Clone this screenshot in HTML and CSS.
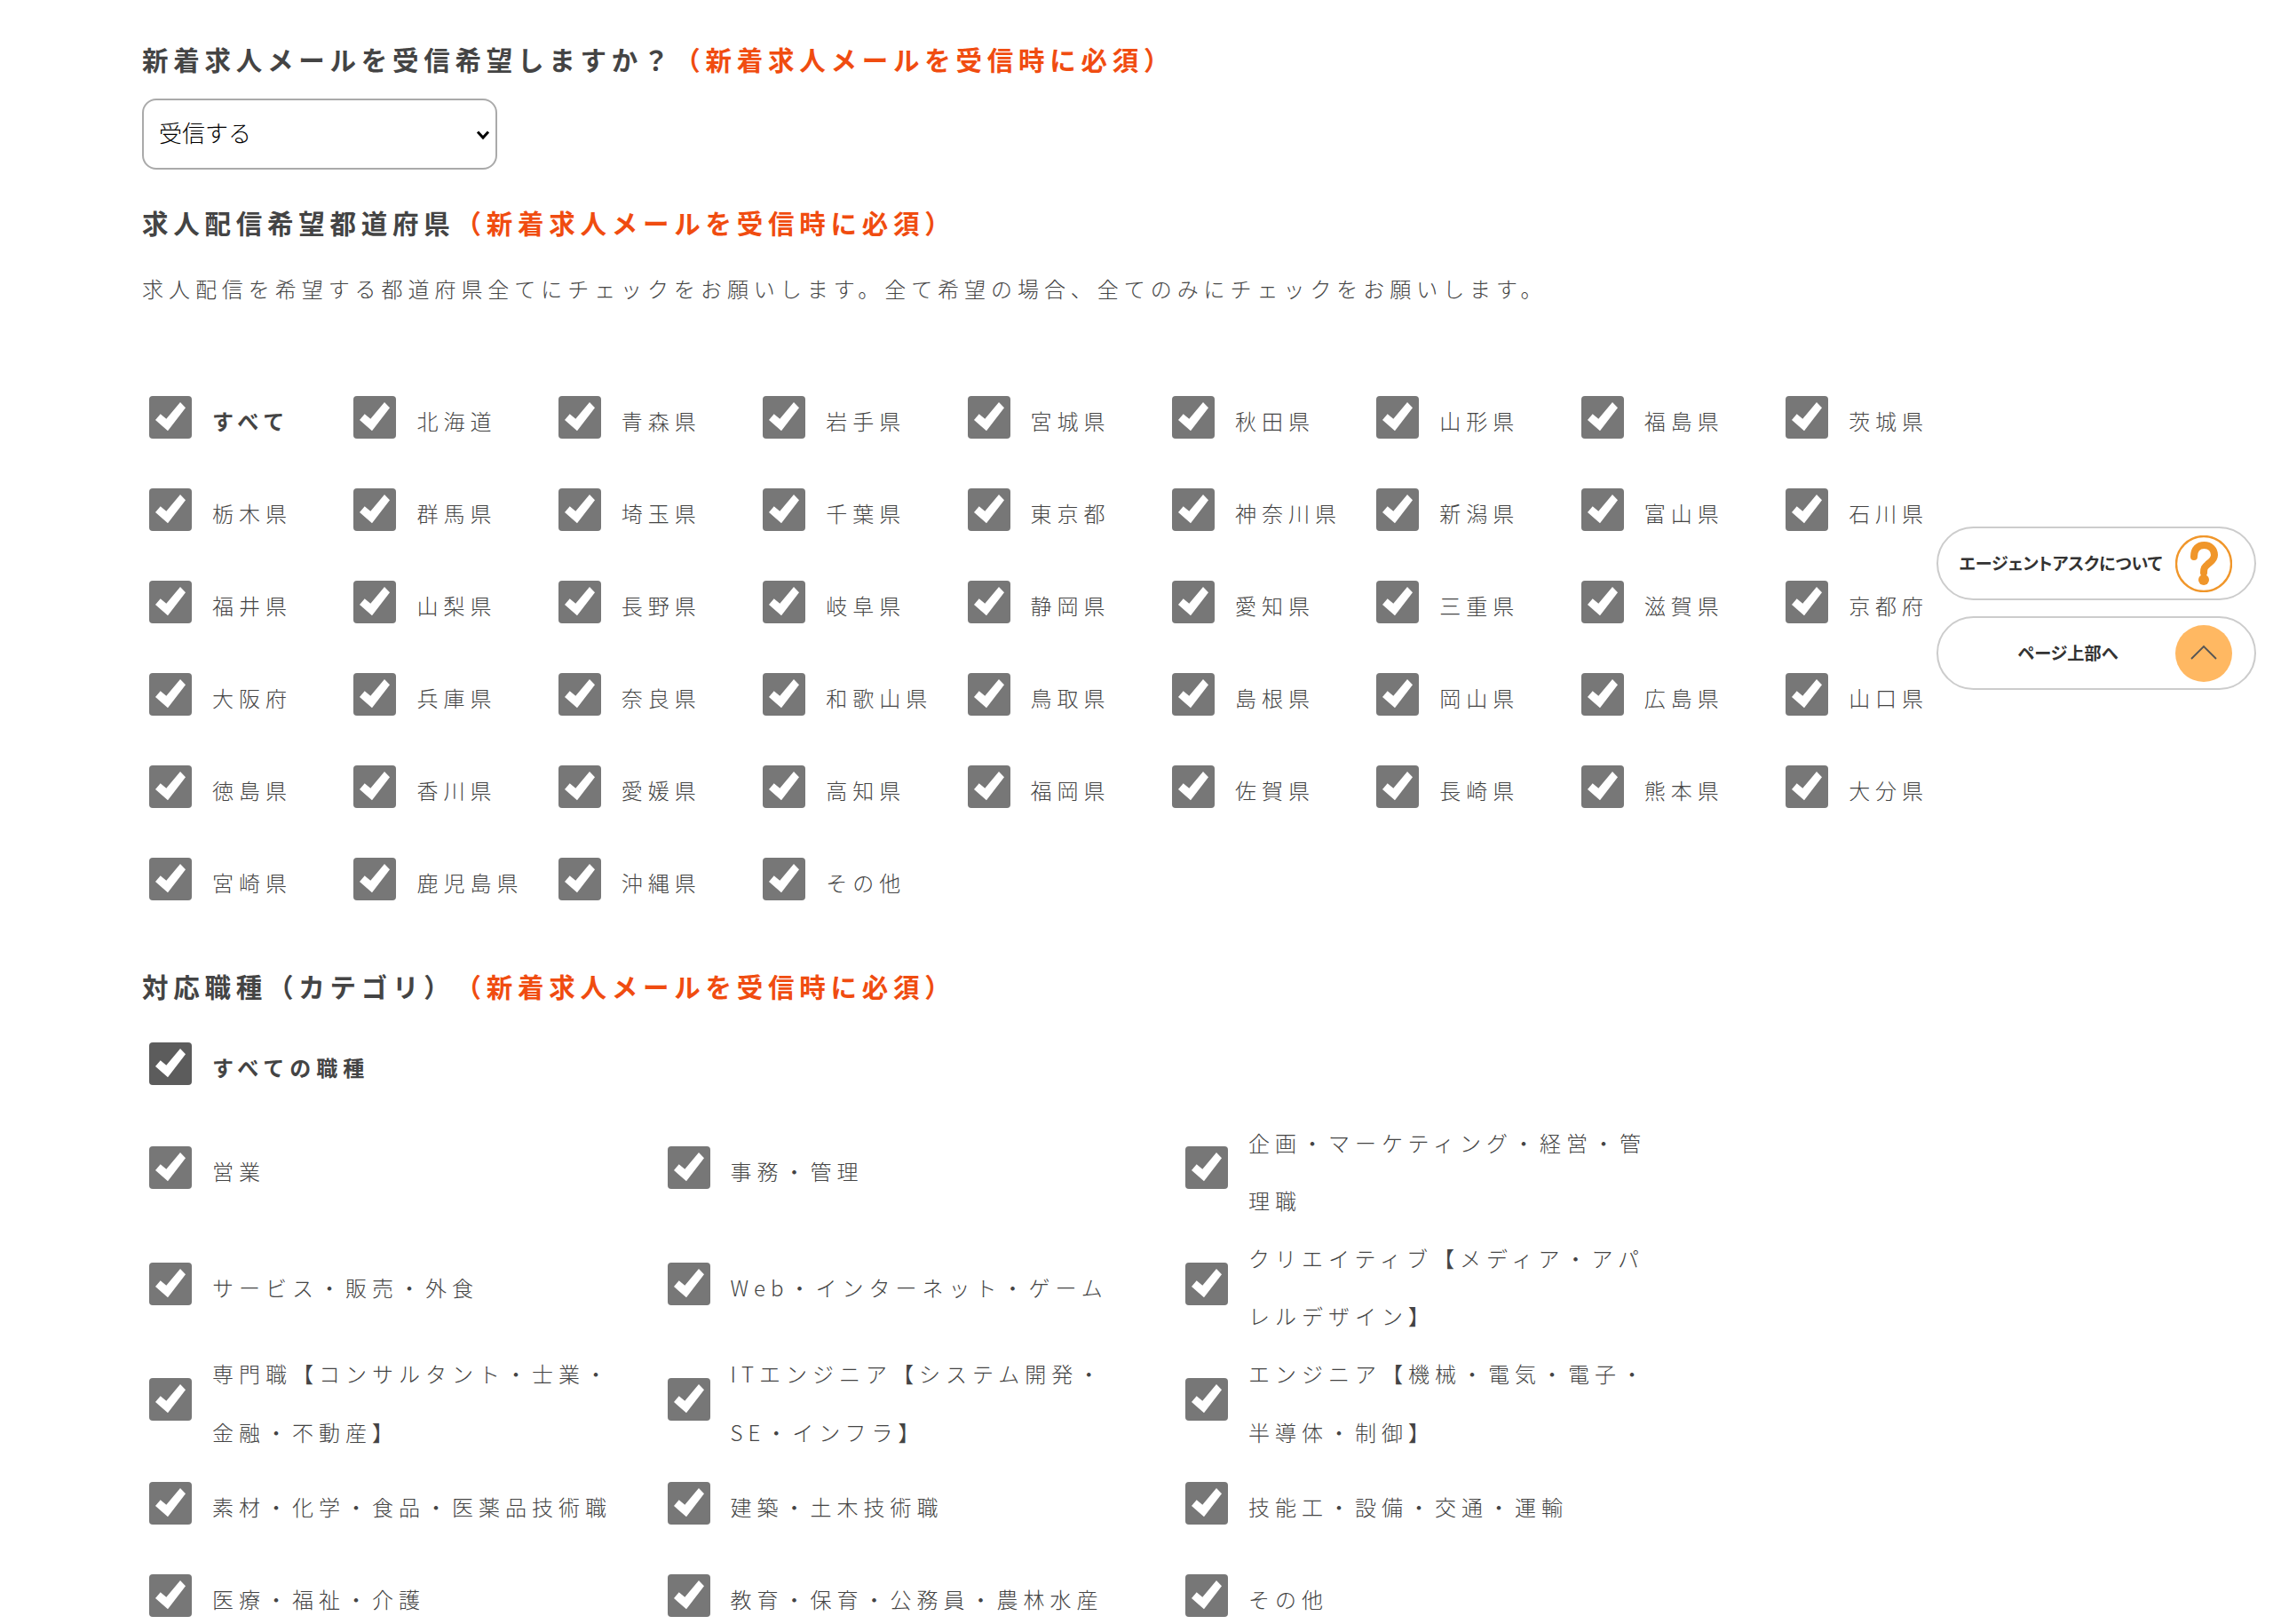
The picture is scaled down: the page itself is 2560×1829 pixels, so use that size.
FILE: index.html
```html
<!DOCTYPE html>
<html lang="ja">
<head>
<meta charset="utf-8">
<title>新着求人メール</title>
<link rel="stylesheet" href="styles.css">
</head>
<body>
<svg class="defs" width="0" height="0" aria-hidden="true"><symbol id="c" viewBox="0 0 48 48"><polygon points="7,27 12.7,20.3 19.3,25.7 35,7 41,13.3 21,39.3" fill="#fff"/></symbol></svg>
<main class="form">
  <h2 class="title title-first">新着求人メールを受信希望しますか？<span class="req">（新着求人メールを受信時に必須）</span></h2>
  <div class="select-wrap">
    <select class="select"><option>受信する</option><option>受信しない</option></select>
    <svg class="arrow" viewBox="0 0 16 12" width="16" height="12"><path d="M2 2.5 8 9 14 2.5" fill="none" stroke="#000" stroke-width="3"/></svg>
  </div>
  <h2 class="title title-second">求人配信希望都道府県<span class="req">（新着求人メールを受信時に必須）</span></h2>
  <p class="lead">求人配信を希望する都道府県全てにチェックをお願いします。全て希望の場合、全てのみにチェックをお願いします。</p>
  <div class="prefs">
    <label class="item"><span class="box"><svg><use href="#c"/></svg></span><b>すべて</b></label>
    <label class="item"><span class="box"><svg><use href="#c"/></svg></span>北海道</label>
    <label class="item"><span class="box"><svg><use href="#c"/></svg></span>青森県</label>
    <label class="item"><span class="box"><svg><use href="#c"/></svg></span>岩手県</label>
    <label class="item"><span class="box"><svg><use href="#c"/></svg></span>宮城県</label>
    <label class="item"><span class="box"><svg><use href="#c"/></svg></span>秋田県</label>
    <label class="item"><span class="box"><svg><use href="#c"/></svg></span>山形県</label>
    <label class="item"><span class="box"><svg><use href="#c"/></svg></span>福島県</label>
    <label class="item"><span class="box"><svg><use href="#c"/></svg></span>茨城県</label>
    <label class="item"><span class="box"><svg><use href="#c"/></svg></span>栃木県</label>
    <label class="item"><span class="box"><svg><use href="#c"/></svg></span>群馬県</label>
    <label class="item"><span class="box"><svg><use href="#c"/></svg></span>埼玉県</label>
    <label class="item"><span class="box"><svg><use href="#c"/></svg></span>千葉県</label>
    <label class="item"><span class="box"><svg><use href="#c"/></svg></span>東京都</label>
    <label class="item"><span class="box"><svg><use href="#c"/></svg></span>神奈川県</label>
    <label class="item"><span class="box"><svg><use href="#c"/></svg></span>新潟県</label>
    <label class="item"><span class="box"><svg><use href="#c"/></svg></span>富山県</label>
    <label class="item"><span class="box"><svg><use href="#c"/></svg></span>石川県</label>
    <label class="item"><span class="box"><svg><use href="#c"/></svg></span>福井県</label>
    <label class="item"><span class="box"><svg><use href="#c"/></svg></span>山梨県</label>
    <label class="item"><span class="box"><svg><use href="#c"/></svg></span>長野県</label>
    <label class="item"><span class="box"><svg><use href="#c"/></svg></span>岐阜県</label>
    <label class="item"><span class="box"><svg><use href="#c"/></svg></span>静岡県</label>
    <label class="item"><span class="box"><svg><use href="#c"/></svg></span>愛知県</label>
    <label class="item"><span class="box"><svg><use href="#c"/></svg></span>三重県</label>
    <label class="item"><span class="box"><svg><use href="#c"/></svg></span>滋賀県</label>
    <label class="item"><span class="box"><svg><use href="#c"/></svg></span>京都府</label>
    <label class="item"><span class="box"><svg><use href="#c"/></svg></span>大阪府</label>
    <label class="item"><span class="box"><svg><use href="#c"/></svg></span>兵庫県</label>
    <label class="item"><span class="box"><svg><use href="#c"/></svg></span>奈良県</label>
    <label class="item"><span class="box"><svg><use href="#c"/></svg></span>和歌山県</label>
    <label class="item"><span class="box"><svg><use href="#c"/></svg></span>鳥取県</label>
    <label class="item"><span class="box"><svg><use href="#c"/></svg></span>島根県</label>
    <label class="item"><span class="box"><svg><use href="#c"/></svg></span>岡山県</label>
    <label class="item"><span class="box"><svg><use href="#c"/></svg></span>広島県</label>
    <label class="item"><span class="box"><svg><use href="#c"/></svg></span>山口県</label>
    <label class="item"><span class="box"><svg><use href="#c"/></svg></span>徳島県</label>
    <label class="item"><span class="box"><svg><use href="#c"/></svg></span>香川県</label>
    <label class="item"><span class="box"><svg><use href="#c"/></svg></span>愛媛県</label>
    <label class="item"><span class="box"><svg><use href="#c"/></svg></span>高知県</label>
    <label class="item"><span class="box"><svg><use href="#c"/></svg></span>福岡県</label>
    <label class="item"><span class="box"><svg><use href="#c"/></svg></span>佐賀県</label>
    <label class="item"><span class="box"><svg><use href="#c"/></svg></span>長崎県</label>
    <label class="item"><span class="box"><svg><use href="#c"/></svg></span>熊本県</label>
    <label class="item"><span class="box"><svg><use href="#c"/></svg></span>大分県</label>
    <label class="item"><span class="box"><svg><use href="#c"/></svg></span>宮崎県</label>
    <label class="item"><span class="box"><svg><use href="#c"/></svg></span>鹿児島県</label>
    <label class="item"><span class="box"><svg><use href="#c"/></svg></span>沖縄県</label>
    <label class="item"><span class="box"><svg><use href="#c"/></svg></span>その他</label>
  </div>
  <h2 class="title title-third">対応職種（カテゴリ）<span class="req">（新着求人メールを受信時に必須）</span></h2>
  <label class="item item-all"><span class="box box-dark"><svg><use href="#c"/></svg></span><b>すべての職種</b></label>
  <div class="jobs">
    <label class="item"><span class="box"><svg><use href="#c"/></svg></span><span class="job">営業</span></label>
    <label class="item"><span class="box"><svg><use href="#c"/></svg></span><span class="job">事務・管理</span></label>
    <label class="item"><span class="box"><svg><use href="#c"/></svg></span><span class="job">企画・マーケティング・経営・管理職</span></label>
    <label class="item"><span class="box"><svg><use href="#c"/></svg></span><span class="job">サービス・販売・外食</span></label>
    <label class="item"><span class="box"><svg><use href="#c"/></svg></span><span class="job">Web・インターネット・ゲーム</span></label>
    <label class="item"><span class="box"><svg><use href="#c"/></svg></span><span class="job">クリエイティブ【メディア・アパレルデザイン】</span></label>
    <label class="item"><span class="box"><svg><use href="#c"/></svg></span><span class="job">専門職【コンサルタント・士業・金融・不動産】</span></label>
    <label class="item"><span class="box"><svg><use href="#c"/></svg></span><span class="job">ITエンジニア【システム開発・SE・インフラ】</span></label>
    <label class="item"><span class="box"><svg><use href="#c"/></svg></span><span class="job">エンジニア【機械・電気・電子・半導体・制御】</span></label>
    <label class="item"><span class="box"><svg><use href="#c"/></svg></span><span class="job">素材・化学・食品・医薬品技術職</span></label>
    <label class="item"><span class="box"><svg><use href="#c"/></svg></span><span class="job">建築・土木技術職</span></label>
    <label class="item"><span class="box"><svg><use href="#c"/></svg></span><span class="job">技能工・設備・交通・運輸</span></label>
    <label class="item"><span class="box"><svg><use href="#c"/></svg></span><span class="job">医療・福祉・介護</span></label>
    <label class="item"><span class="box"><svg><use href="#c"/></svg></span><span class="job">教育・保育・公務員・農林水産</span></label>
    <label class="item"><span class="box"><svg><use href="#c"/></svg></span><span class="job">その他</span></label>
  </div>
</main>
<aside class="float">
  <a class="pill pill-long">
    <span class="pill-text">エージェントアスクについて</span>
    <svg class="pill-icon" viewBox="0 0 64 64" width="64" height="64"><circle cx="32" cy="32" r="31" fill="#fff" stroke="#f0962a" stroke-width="2.4"/><path d="M21 24C21 15 26 11 32.500 11 39.500 11 44 16 44 22 44 28 39 30 36 33 33 35.500 32 37 32 42" fill="none" stroke="#f0962a" stroke-width="8" stroke-linecap="round"/><circle cx="32" cy="50" r="6" fill="#f0962a"/></svg>
  </a>
  <a class="pill">
    <span class="pill-text">ページ上部へ</span>
    <svg class="pill-icon" viewBox="0 0 64 64" width="64" height="64"><circle cx="32" cy="32" r="32" fill="#ffb862"/><path d="M18 38 32 24 46 38" fill="none" stroke="#555" stroke-width="1.800"/></svg>
  </a>
</aside>
</body>
</html>
```
FILE: styles.css
```css
* { box-sizing: border-box; }
html, body { margin: 0; height: 1829px; overflow: hidden; background: #fff; }
body {
  font-family: "Noto Sans CJK JP", "Noto Sans", sans-serif;
  color: #444;
  position: relative;
  text-spacing-trim: space-all;
}
.defs { position: absolute; }
.form { padding-left: 160px; }
.title {
  margin: 0;
  font-size: 29.5px;
  line-height: 46px;
  font-weight: 700;
  letter-spacing: 5.75px;
  color: #444;
}
.title-first { padding-top: 43px; }
.title-second { margin-top: 36px; }
.title-third { margin-top: 41.5px; }
.req { color: #f04c10; }
.select-wrap { position: relative; width: 400px; margin-top: 22px; }
.select {
  display: block;
  width: 400px;
  height: 80px;
  padding: 0 17px 6px;
  border: 2px solid #aaa;
  border-radius: 16px;
  background: #fff;
  color: #000;
  font: 300 26px "Noto Sans CJK JP", sans-serif;
  appearance: none;
}
.arrow { position: absolute; right: 8px; top: 35px; pointer-events: none; }
.lead {
  margin: 28px 0 0;
  font-size: 24px;
  line-height: 48px;
  font-weight: 300;
  letter-spacing: 5.95px;
  color: #444;
}
.prefs {
  display: grid;
  grid-template-columns: repeat(9, 230.4px);
  grid-auto-rows: 104px;
  margin-top: 72.5px;
}
.item {
  display: flex;
  align-items: center;
  font-size: 24px;
  line-height: 65.2px;
  font-weight: 300;
  letter-spacing: 6px;
  color: #444;
  white-space: nowrap;
}
.item b { font-weight: 700; color: #444; }
.box {
  flex: none;
  width: 48px;
  height: 48px;
  margin: -7px 23px 0 8px;
  border-radius: 4px;
  background: #777;
}
.box svg { display: block; width: 48px; height: 48px; }
.box-dark { background: #5c5c5c; }
.item-all { height: 104px; margin-top: 16.5px; }
.jobs {
  display: grid;
  grid-template-columns: repeat(3, 583.5px);
  grid-auto-rows: minmax(104px, auto);
}
.job { width: 465px; white-space: normal; }
.float {
  position: absolute;
  left: 2181px;
  top: 593px;
  display: flex;
  flex-direction: column;
  gap: 18px;
}
.pill {
  position: relative;
  display: flex;
  align-items: center;
  width: 360px;
  height: 83px;
  border: 2px solid #ccc;
  border-radius: 42px;
  background: #fff;
}
.pill-text {
  width: 272px;
  padding: 0 0 2px 20px;
  text-align: center;
  font-size: 19.2px;
  font-weight: 700;
  color: #333;
  white-space: nowrap;
  font-feature-settings: "palt";
}
.pill-long .pill-text { padding-right: 16px; font-size: 19px; }
.pill-icon { position: absolute; left: 267px; top: 8px; }
```
